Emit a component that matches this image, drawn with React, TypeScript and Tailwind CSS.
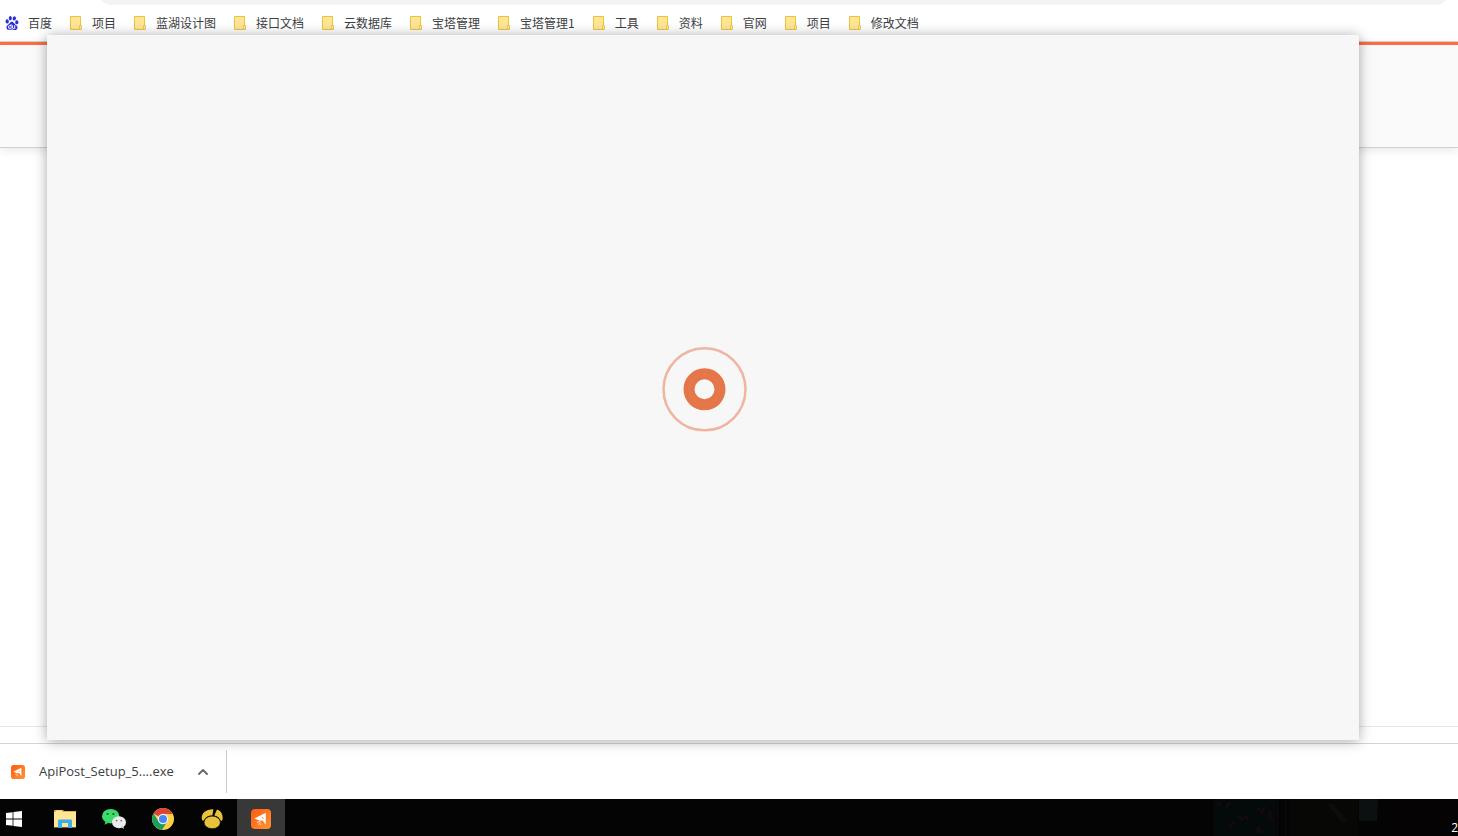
import type { ReactNode } from 'react';
import { ChevronUp } from 'lucide-react';
import { SiBaidu } from 'react-icons/si';

const bookmarks = [
    '项目',
    '蓝湖设计图',
    '接口文档',
    '云数据库',
    '宝塔管理',
    '宝塔管理1',
    '工具',
    '资料',
    '官网',
    '项目',
    '修改文档',
];

function BookmarkFolder() {
    return (
        <svg className="h-[14px] w-3 shrink-0" viewBox="0 0 12 14" aria-hidden="true">
            <path d="M.5.5h10v13H.5z" fill="#ffe594" stroke="#e8c341" />
            <path d="M9.5 9.5h2v4h-2z" fill="#ffe594" stroke="#e8c341" strokeWidth=".8" />
        </svg>
    );
}

function BookmarksBar() {
    return (
        <nav className="flex h-9 items-center gap-[18px] overflow-hidden bg-white pl-[5px] text-xs whitespace-nowrap text-[#3c4043]">
            <a href="#" className="flex items-center gap-[9px]">
                <SiBaidu className="size-[14px]" color="#2a2fdc" aria-hidden="true" />
                百度
            </a>
            {bookmarks.map((name, i) => (
                <a key={i} href="#" className="flex items-center gap-2.5">
                    <BookmarkFolder />
                    {name}
                </a>
            ))}
        </nav>
    );
}

function ApiPostIcon({ className, id }: { className: string; id: string }) {
    return (
        <svg className={className} viewBox="0 0 20 20" aria-hidden="true">
            <defs>
                <linearGradient id={id} x1="0" y1="0" x2="1" y2="1">
                    <stop offset="0" stopColor="#ff5a14" />
                    <stop offset="1" stopColor="#ff9430" />
                </linearGradient>
            </defs>
            <rect width="20" height="20" rx="4" fill={`url(#${id})`} />
            <path d="M3.4 9.6 14.8 3.8v12L11.6 11.6 8 11.4z" fill="#fff" />
            <path d="m10.4 8.8 1.8-.8.2 2z" fill="#ff7a24" />
            <path d="m6 13.6 2.4-1M7.2 15.6l2.2-1.6M9.6 16.4l.4-1.6M8 12.6l2 .8" stroke="#ffd9bd" />
        </svg>
    );
}

function WindowsIcon() {
    return (
        <svg className="size-4" viewBox="0 0 16 16" fill="#fff" aria-hidden="true">
            <path d="M0 2.1 6.6 1.2v6.3H0zM7.4 1.1 16 0v7.5H7.4zM0 8.4h6.6v6.4L0 13.9zM7.4 8.4H16V16l-8.6-1.1z" />
        </svg>
    );
}

function ExplorerIcon() {
    return (
        <svg className="h-[18px] w-[22px]" viewBox="0 0 22 18" aria-hidden="true">
            <path d="M0 1q0-1 1-1h8l1 1h12v5H0z" fill="#e9b23a" />
            <path d="M2 .6h6v1.2H2z" fill="#fff3c4" />
            <path d="M0 2h22v15.4H0z" fill="#ffe694" />
            <path d="M4 18v-7.4Q4 9.4 5.4 9.4h11.2q1.4 0 1.400 1.200V18h-4v-5H8v5z" fill="#3bb0e8" />
        </svg>
    );
}

function WeChatIcon() {
    return (
        <svg className="h-5 w-6" viewBox="0 0 24 20" aria-hidden="true">
            <ellipse cx="8.7" cy="7.2" rx="8.7" ry="7.2" fill="#3edb6c" />
            <path d="m3.4 11.6-.8 4.2 4.2-2z" fill="#2ccf60" />
            <circle cx="5.6" cy="5" r="1.1" fill="#0b5e2b" />
            <circle cx="11.4" cy="5" r="1.1" fill="#0b5e2b" />
            <ellipse cx="17" cy="13.2" rx="7" ry="6" fill="#ececec" />
            <path d="m18.6 17.8 3.2 2.2-.4-4z" fill="#d6d6d6" />
            <circle cx="14.6" cy="11.6" r=".9" fill="#777" />
            <circle cx="19.2" cy="11.6" r=".9" fill="#777" />
        </svg>
    );
}

function ChromeIcon() {
    return (
        <svg className="size-[22px]" viewBox="0 0 22 22" aria-hidden="true">
            <circle cx="11" cy="11" r="11" fill="#fdd047" />
            <path d="M11 11 1.5 5.5a11 11 0 0 1 19-.1V6H11z" fill="#db4437" />
            <path d="M1.5 5.5a11 11 0 0 0 8.4 16.4L15.4 13.5 6.7 13.5z" fill="#1a9f5c" />
            <circle cx="11" cy="11" r="5.2" fill="#f4f4f4" />
            <circle cx="11" cy="11" r="4" fill="#4587f3" />
        </svg>
    );
}

function NavicatIcon() {
    return (
        <svg className="h-5 w-[22px]" viewBox="0 0 22 20" fill="#e9c23c" aria-hidden="true">
            <path d="M1.2 11.4C-.8 5.400 4 0 12.400.3L11.400 6.400Q5 6.400 2.800 11.600z" />
            <path d="M13.300 6.600 16 .4C20.600 1.600 22.600 7 21.200 11.600L19.800 12Q18.200 7.600 13.300 6.600z" />
            <ellipse cx="11.2" cy="13.4" rx="8.2" ry="6.4" stroke="#040404" strokeWidth=".8" />
        </svg>
    );
}

/* what shows of the wallpaper through the dark taskbar */
function TaskbarBackdrop() {
    return (
        <svg className="absolute top-0 right-0 h-full w-[250px]" viewBox="0 0 250 37" preserveAspectRatio="none" aria-hidden="true">
            <path d="M6 0h62v37H6z" fill="#04090a" />
            <path d="M69 0h1v37h-1zM77 0h1v37h-1z" fill="#0b0b0c" />
            <path d="M82 0h68v37H82z" fill="#070705" />
            <path d="M151 0h19l-1 22h-18z" fill="#0d1011" />
            <path d="m118 4 8 1 14 17-7 1z" fill="#0c0c0c" />
            <path
                d="m9 4 4 2m9-3-4 6m12 9 6 3m-10 2-5 6m16-12 4 4m8-12 5 3m3-5-4 8m8 4 5 2m-3-9-2 6M48 30l6 4m-3-7-1 7"
                fill="none"
                stroke="#150910"
                strokeWidth="3"
            />
            <path d="M190 0h60v37h-60z" fill="#050304" />
        </svg>
    );
}

function TaskButton({ label, active, children }: { label: string; active?: boolean; children: ReactNode }) {
    return (
        <button
            aria-label={label}
            className={`flex h-full w-12 items-center justify-center pt-[3px] ${active ? 'bg-[#383838]' : ''}`}
        >
            {children}
        </button>
    );
}

function Taskbar() {
    return (
        <footer className="relative flex h-[37px] shrink-0 items-center gap-px bg-[#040404]">
            <TaskbarBackdrop />
            <button aria-label="Start" className="flex h-full w-10 items-center pt-[3px] pl-1.5">
                <WindowsIcon />
            </button>
            <TaskButton label="Explorer">
                <ExplorerIcon />
            </TaskButton>
            <TaskButton label="WeChat">
                <WeChatIcon />
            </TaskButton>
            <TaskButton label="Chrome">
                <ChromeIcon />
            </TaskButton>
            <TaskButton label="Navicat">
                <NavicatIcon />
            </TaskButton>
            <TaskButton label="ApiPost" active>
                <ApiPostIcon className="size-5" id="task-apipost" />
            </TaskButton>
            <span className="relative ml-auto self-end font-['Open_Sans',sans-serif] text-xs text-white">2</span>
        </footer>
    );
}

function DownloadShelf() {
    return (
        <div className="flex h-14 shrink-0 items-start border-t border-[#d3d3d3] bg-white pt-1.5">
            <div className="flex h-[43px] items-center border-r border-[#c9cbce] pr-[15px] pl-[11px]">
                <ApiPostIcon className="size-[14px]" id="shelf-apipost" />
                <a href="#" className="pl-[14px] font-['Open_Sans',sans-serif] text-[13px] text-[#3c4043]">
                    ApiPost_Setup_5....exe
                </a>
                <button aria-label="More" className="pl-[21px] text-[#6b6f73]">
                    <ChevronUp className="size-4" strokeWidth={3} />
                </button>
            </div>
        </div>
    );
}

function LoadingWindow() {
    return (
        <section className="absolute top-[35px] right-[99px] bottom-24 left-[47px] flex items-center justify-center bg-[#f7f7f7] shadow-[0_1px_12px_rgba(0,0,0,0.35)]">
            <svg className="size-[90px]" viewBox="0 0 90 90" fill="none" role="img" aria-label="Loading">
                <circle cx="46.5" cy="46.3" r="41" stroke="#efb5a0" strokeWidth="2.5" />
                <circle cx="46.5" cy="46.3" r="15.5" stroke="#e4764a" strokeWidth="11" />
                <circle cx="46.5" cy="46.3" r="15.5" stroke="#e98157" strokeWidth=".5" />
            </svg>
        </section>
    );
}

export default function App() {
    return (
        <div className="relative flex h-screen flex-col overflow-hidden bg-white font-['Noto_Sans_CJK_SC',sans-serif]">
            <div className="h-[5px] shrink-0 overflow-hidden pr-[9px] pl-[98px]">
                <div className="-mt-[23px] h-7 rounded-full bg-[#f1f3f4]"></div>
            </div>
            <BookmarksBar />
            <main className="flex grow flex-col border-t border-[#d5d9dc]">
                <header className="h-[106px] border-t-[3px] border-b border-t-[#ff6c40] border-b-[#d0d0d0] bg-[#fafafa] shadow-[0_2px_10px_rgba(0,0,0,0.1)]"></header>
                <div className="grow"></div>
                <div className="h-[17px] border-t border-[#e8e8e8]"></div>
            </main>
            <DownloadShelf />
            <Taskbar />
            <LoadingWindow />
        </div>
    );
}
